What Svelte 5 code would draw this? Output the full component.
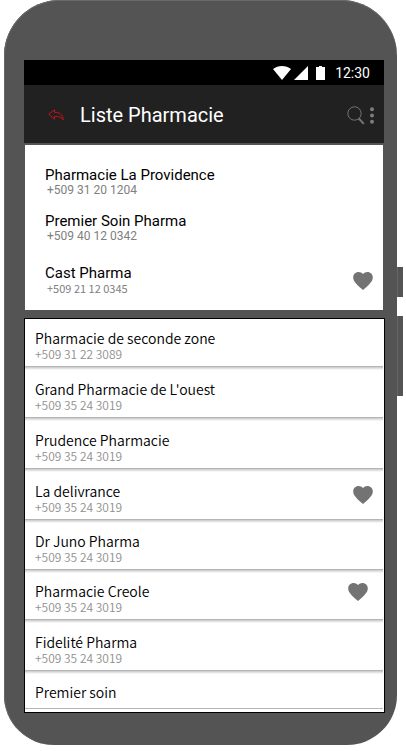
<script>
  const favourites = [
    { name: 'Pharmacie La Providence', phone: '+509 31 20 1204' },
    { name: 'Premier Soin Pharma', phone: '+509 40 12 0342' },
    { name: 'Cast Pharma', phone: '+509 21 12 0345', liked: true, small: true }
  ];
  const pharmacies = [
    { name: 'Pharmacie de seconde zone', phone: '+509 31 22 3089' },
    { name: "Grand Pharmacie de L'ouest", phone: '+509 35 24 3019' },
    { name: 'Prudence Pharmacie', phone: '+509 35 24 3019' },
    { name: 'La delivrance', phone: '+509 35 24 3019', liked: true },
    { name: 'Dr Juno Pharma', phone: '+509 35 24 3019', tight: true },
    { name: 'Pharmacie Creole', phone: '+509 35 24 3019', liked: true, tight: true, inset: true },
    { name: 'Fidelité Pharma', phone: '+509 35 24 3019' },
    { name: 'Premier soin', tight: true }
  ];
</script>

{#snippet heart()}
  <button class="heart" aria-label="Favori">
    <svg viewBox="2 3 20 18.35" width="20" height="18" aria-hidden="true">
      <path fill="#737373" d="M12 21.35l-1.45-1.32C5.4 15.36 2 12.28 2 8.5 2 5.42 4.42 3 7.5 3c1.74 0 3.41.81 4.5 2.09C13.09 3.81 14.76 3 16.5 3 19.58 3 22 5.42 22 8.5c0 3.78-3.4 6.86-8.55 11.54L12 21.35z" />
    </svg>
  </button>
{/snippet}

<div class="phone">
  <span class="side power"></span>
  <span class="side volume"></span>

  <div class="status">
    <svg width="18" height="14" viewBox="0 0 18 14" aria-hidden="true"><path fill="#fff" d="M0 3C5-1 13-1 18 3L9 14z" /></svg>
    <svg width="14" height="14" viewBox="0 0 14 14" aria-hidden="true"><path fill="#fff" d="M14 0v14H0z" /></svg>
    <svg width="9" height="14" viewBox="0 0 9 14" aria-hidden="true"><path fill="#fff" d="M0 1h3V0h3v1h3v13H0z" /></svg>
    <time>12:30</time>
  </div>

  <header>
    <button class="back" aria-label="Retour">
      <svg width="16" height="12" viewBox="0 0 16 12" fill="none" stroke="#c4121a" stroke-width="1" stroke-linejoin="round" aria-hidden="true">
        <path d="M.7 5.2L6.5.8v2.5c5 0 8.4 2.2 8.8 7.6-1.6-2.7-4.3-3.7-8.8-3.4v2.6z" />
      </svg>
    </button>
    <h1>Liste Pharmacie</h1>
    <button aria-label="Rechercher">
      <svg width="18" height="19" viewBox="0 0 18 19" fill="none" stroke="#737373" aria-hidden="true">
        <circle cx="7.5" cy="7.5" r="6.7" stroke-width="1" />
        <path d="M11.8 12.5l5 5.4" stroke-width="2" />
      </svg>
    </button>
    <button aria-label="Menu">
      <svg width="4" height="17" viewBox="0 0 4 17" fill="#7c7c7c" aria-hidden="true">
        <circle cx="2" cy="2.2" r="2" /><circle cx="2" cy="8.5" r="2" /><circle cx="2" cy="14.8" r="2" />
      </svg>
    </button>
  </header>

  <ul class="card">
    {#each favourites as item}
      <li>
        <div class="text">
          <span class="name">{item.name}</span>
          <span class="number" class:small={item.small}>{item.phone}</span>
        </div>
        {#if item.liked}{@render heart()}{/if}
      </li>
    {/each}
  </ul>

  <ul class="list">
    {#each pharmacies as item}
      <li class:tight={item.tight} class:inset={item.inset}>
        <div class="text">
          <span class="name">{item.name}</span>
          {#if item.phone}<span class="number">{item.phone}</span>{/if}
        </div>
        {#if item.liked}{@render heart()}{/if}
      </li>
    {/each}
  </ul>
</div>

<style>
  :global(body) {
    background: #fff;
  }
  .phone {
    position: relative;
    box-sizing: border-box;
    margin: 0 9px 5px 4px;
    padding: 60px 12px 32px 20px;
    background: #545454;
    border-radius: 56px 56px 50px 50px;
    box-shadow: inset 0 1px 0 #6a6a6a, inset 1px 0 0 #666;
    font-family: Roboto, sans-serif;
  }
  .side {
    position: absolute;
    left: 100%;
    width: 6px;
    background: #545454;
    box-shadow: inset 1px 0 0 #666;
  }
  .power {
    top: 267px;
    height: 30px;
  }
  .volume {
    top: 316px;
    height: 80px;
  }
  button {
    display: flex;
    padding: 0;
    border: 0;
    background: none;
    cursor: pointer;
  }
  .status {
    display: flex;
    align-items: center;
    justify-content: flex-end;
    height: 25px;
    margin-right: 1px;
    padding-right: 14px;
    background: #000;
    color: #fff;
    font-size: 14px;
  }
  .status svg {
    margin-right: 3px;
  }
  .status svg:nth-of-type(2) {
    margin-right: 8px;
  }
  .status svg:nth-of-type(3) {
    margin-right: 10px;
  }
  header {
    display: flex;
    align-items: center;
    height: 56px;
    margin-right: 1px;
    padding: 2px 10px 0 24px;
    background: #212121;
  }
  .back {
    margin-right: 16px;
  }
  h1 {
    flex: 1;
    margin: 0;
    color: #fff;
    font-size: 20px;
    font-weight: 400;
    line-height: 24px;
  }
  header button + button {
    margin-left: 5px;
  }
  ul {
    margin: 0;
    padding: 0;
    list-style: none;
    background: #fff;
  }
  li {
    display: flex;
    align-items: center;
    justify-content: space-between;
  }
  .text {
    display: flex;
    flex-direction: column;
  }
  .card {
    display: flex;
    flex-direction: column;
    gap: 15px;
    margin: 2px 2px 8px 1px;
    padding: 22px 10px 14px 20px;
  }
  .card li:last-child {
    margin-top: 6px;
  }
  .card .name {
    color: #000;
    font-size: 15px;
    line-height: 16px;
  }
  .card .number {
    padding-left: 2px;
    color: #808080;
    font-size: 12px;
    line-height: 15px;
  }
  .card .small {
    font-family: "Noto Sans CJK SC", sans-serif;
    font-size: 11px;
  }
  .list {
    border: 1px solid #000;
    padding: 0 1px 3px 0;
    font-family: "Noto Sans CJK SC DemiLight", "Noto Sans CJK SC", sans-serif;
    font-weight: 350;
  }
  .list li {
    align-items: flex-start;
    padding: 14px 10px 4px;
    border-bottom: 1px solid #b4b6b6;
    background: linear-gradient(#c8c8c8, #fff 3px);
  }
  .list li:first-child {
    padding-top: 11px;
    background: none;
  }
  .list li.tight {
    padding-top: 13px;
  }
  .list li:last-child {
    padding-bottom: 8px;
  }
  .list li.inset {
    padding-right: 15px;
  }
  .list .heart {
    margin-top: 3px;
  }
  .list .inset .heart {
    margin-top: 0;
  }
  .list .name {
    color: #000;
    font-size: 14px;
    line-height: 16px;
  }
  .list .number {
    color: #909090;
    font-size: 12px;
    line-height: 16px;
  }
</style>
